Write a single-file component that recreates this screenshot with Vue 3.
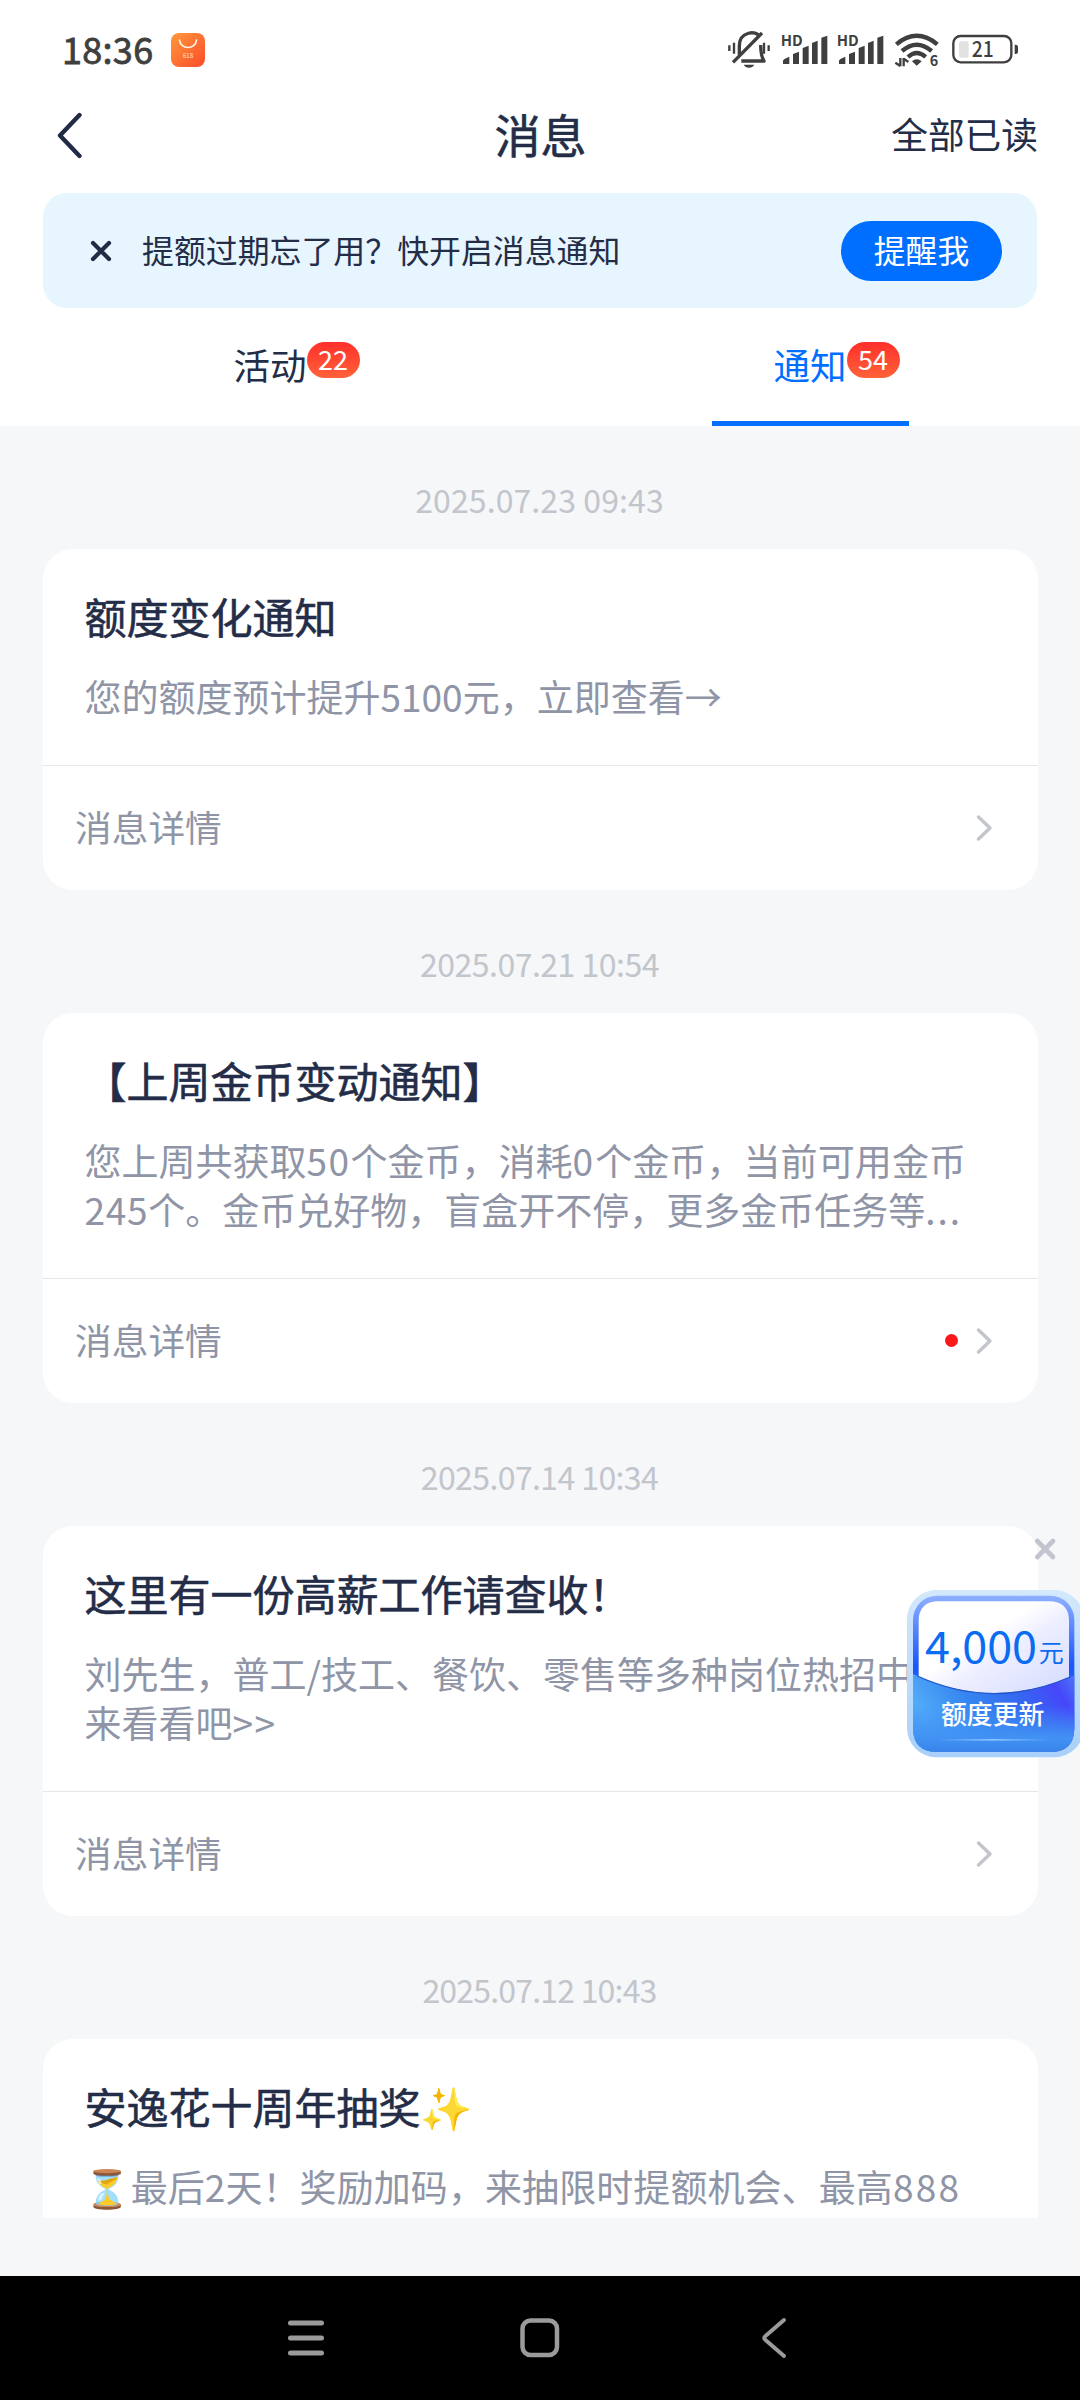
<script setup>
const tabs = [
  { label: '活动', count: 22, active: false },
  { label: '通知', count: 54, active: true },
]

// Each line is a list of [text, letter spacing in px] runs.
const messages = [
  {
    date: '2025.07.23 09:43',
    dateSpacing: 0.1,
    title: '额度变化通知',
    lines: [[['您的额度预计提升5100元，立即查看→', 0]]],
    unread: false,
  },
  {
    date: '2025.07.21 10:54',
    dateSpacing: -0.5,
    title: '【上周金币变动通知】',
    lines: [
      [['您上周共获取', 0], ['50', 1.5], ['个金币，消耗', 0], ['0', 2], ['个金币，当前可用金币', 0.1]],
      [['245', 0.7], ['个。金币兑好物，盲盒开不停，更多金币任务等', 0], ['...', 2]],
    ],
    unread: true,
  },
  {
    date: '2025.07.14 10:34',
    dateSpacing: -0.6,
    title: '这里有一份高薪工作请查收！',
    lines: [
      [['刘先生，普工/技工、餐饮、零售等多种岗位热招中', 0]],
      [['来看看吧', 0], ['>>', 1.5]],
    ],
    unread: false,
  },
  {
    date: '2025.07.12 10:43',
    dateSpacing: -0.8,
    title: '安逸花十周年抽奖✨',
    lines: [[['⏳最后2天！奖励加码，来抽限时提额机会、最高', 0.08], ['888', 2.3]]],
    unread: false,
  },
]
</script>

<template>
  <div class="phone">
    <div class="top">
      <div class="status">
        <div class="status-left">
          <span class="time">18:36</span>
          <svg class="app-icon" width="34" height="34" viewBox="0 0 34 34">
            <defs>
              <linearGradient id="bag" x1="0" y1="0" x2="1" y2="1">
                <stop offset="0" stop-color="#ff9a3c" />
                <stop offset="1" stop-color="#fb4a2a" />
              </linearGradient>
            </defs>
            <rect width="34" height="34" rx="8" fill="url(#bag)" />
            <path d="M8.500 7c1 10 16 10 17 0" fill="none" stroke="#fff3e6" stroke-width="1.700" stroke-linecap="round" />
            <text x="17" y="25" font-size="6" text-anchor="middle" fill="#ffe3d0">618</text>
          </svg>
        </div>
        <svg class="status-icons" width="300" height="40" viewBox="72 90 900 120">
          <g fill="none" stroke="#3f3f3f" stroke-width="10">
            <path d="M118 165V138C118 92 172 92 176 108M182 135C182 160 184 170 192 183H124" stroke-linejoin="round" />
            <path d="M186 99L99 187" />
            <path d="M88 136V153M102 128V161M192 128V161M206 136V153" stroke-width="7" />
          </g>
          <path d="M131 194H163Q158 203 147 203T131 194Z" fill="#3f3f3f" />
          <g v-for="x in [0, 168]" :key="x" :transform="`translate(${x} 0)`" fill="#3f3f3f">
            <text x="242" y="137" class="hd" font-size="45" textLength="66" lengthAdjust="spacingAndGlyphs">HD</text>
            <path d="M249 192V182Q249 177 268 170V192ZM279 192V162L297 155V192ZM308 192V144L326 137V192ZM336 192V129L353 122V192ZM364 192V113L382 107V192Z" />
          </g>
          <g fill="none" stroke="#3f3f3f" stroke-width="13">
            <path d="M589 133Q650 82 712 133" />
            <path d="M606 153Q650 115 695 153" />
            <path d="M624 171Q650 147 677 171" />
          </g>
          <path d="M636 184Q650 171 665 184L650 197Z" fill="#3f3f3f" />
          <path d="M601 174V199M611 199V174M586 188L601 198M611 176L625 186" stroke="#3f3f3f" stroke-width="7" fill="none" />
          <text x="689" y="199" class="hd" font-size="43" fill="#3f3f3f">6</text>
          <rect x="760" y="108" width="174" height="79" rx="22" fill="none" stroke="#3f3f3f" stroke-width="7" />
          <rect x="777" y="124" width="29" height="49" rx="6" fill="#e2e2e2" />
          <path d="M944 134h3q7 0 7 7v14q0 7-7 7h-3z" fill="#3f3f3f" />
          <text x="848" y="171" class="battery" font-size="66" text-anchor="middle" textLength="66" lengthAdjust="spacingAndGlyphs" fill="#3f3f3f">21</text>
        </svg>
      </div>

      <div class="nav">
        <svg class="back" width="28" height="48" viewBox="0 0 28 48">
          <path d="M25.500 3L6 23.500L25.500 44" fill="none" stroke="#222b45" stroke-width="4.400" stroke-linecap="round" stroke-linejoin="round" />
        </svg>
        <h1>消息</h1>
        <span class="read-all">全部已读</span>
      </div>

      <div class="banner">
        <svg width="22" height="22" viewBox="0 0 22 22">
          <path d="M3 3L19 19M19 3L3 19" stroke="#222b45" stroke-width="4.200" stroke-linecap="round" />
        </svg>
        <span class="banner-text">提额过期忘了用？快开启消息通知</span>
        <button class="remind">提醒我</button>
      </div>

      <div class="tabs">
        <div v-for="tab in tabs" :key="tab.label" class="tab" :class="{ active: tab.active }">
          <span class="tab-label">{{ tab.label }}<span class="badge">{{ tab.count }}</span></span>
        </div>
      </div>
    </div>

    <div class="list">
      <div v-for="msg in messages" :key="msg.date" class="entry">
        <div class="date"><span :style="{ letterSpacing: msg.dateSpacing + 'px' }">{{ msg.date }}</span></div>
        <div class="card">
          <div class="content">
            <h2>{{ msg.title }}</h2>
            <p v-for="(line, i) in msg.lines" :key="i"><span v-for="(run, j) in line" :key="j" :style="{ letterSpacing: run[1] + 'px' }">{{ run[0] }}</span></p>
          </div>
          <div class="more">
            <span class="more-label">消息详情</span>
            <i v-if="msg.unread" class="dot"></i>
            <svg width="18" height="28" viewBox="0 0 18 28">
              <path d="M3.500 3L15 14L3.500 25" fill="none" stroke="#c3c5cc" stroke-width="3.400" stroke-linecap="round" stroke-linejoin="round" />
            </svg>
          </div>
        </div>
      </div>
    </div>

    <div class="gutter"></div>

    <div class="system-nav">
      <svg width="40" height="44" viewBox="0 0 40 44">
        <path d="M4.500 7H35.500M4.500 22H35.500M4.500 37H35.500" stroke="#9b9b9b" stroke-width="5" stroke-linecap="round" />
      </svg>
      <svg width="40" height="44" viewBox="0 0 40 44">
        <rect x="2.500" y="4.500" width="34.500" height="34.500" rx="8" fill="none" stroke="#9b9b9b" stroke-width="4.500" />
      </svg>
      <svg width="40" height="44" viewBox="0 0 40 44">
        <path d="M30 4L11.500 20Q9 22 11.500 24L30 40" fill="none" stroke="#9b9b9b" stroke-width="4" stroke-linecap="round" />
      </svg>
    </div>

    <div class="float">
      <svg width="173" height="224" viewBox="81 108 519 672">
        <defs>
          <linearGradient id="ring" x1="0" y1="0" x2="0" y2="1">
            <stop offset="0" stop-color="#8fb0ff" />
            <stop offset=".45" stop-color="#1a56fa" />
            <stop offset="1" stop-color="#3a86ee" />
          </linearGradient>
          <linearGradient id="halo" x1="0" y1="0" x2="0" y2="1">
            <stop offset="0" stop-color="#d3e8fb" />
            <stop offset="1" stop-color="#a9d0fa" />
          </linearGradient>
          <linearGradient id="paper" x1="0" y1="0" x2="1" y2="1">
            <stop offset=".4" stop-color="#ffffff" />
            <stop offset=".55" stop-color="#eef0ff" />
            <stop offset="1" stop-color="#d3d9ff" />
          </linearGradient>
          <linearGradient id="pocket" x1="0" y1=".3" x2="1" y2="0">
            <stop offset="0" stop-color="#50aaf8" />
            <stop offset=".3" stop-color="#3686f0" />
            <stop offset=".6" stop-color="#3568f0" />
            <stop offset=".85" stop-color="#4646fa" />
            <stop offset="1" stop-color="#4b78f6" />
          </linearGradient>
          <linearGradient id="pocketFade" x1="0" y1="0" x2="0" y2="1">
            <stop offset=".4" stop-color="#3f8df5" stop-opacity="0" />
            <stop offset=".82" stop-color="#4192f3" />
            <stop offset="1" stop-color="#3a83ea" />
          </linearGradient>
          <linearGradient id="shine" x1="0" y1="0" x2="1" y2="0">
            <stop offset="0" stop-color="#8cc4ff" stop-opacity="0" />
            <stop offset=".5" stop-color="#8cc4ff" />
            <stop offset="1" stop-color="#8cc4ff" stop-opacity="0" />
          </linearGradient>
        </defs>
        <path d="M472 123L519 171M519 123L472 171" stroke="#c2c4cf" stroke-width="14" stroke-linecap="round" />
        <rect x="81" y="270" width="530" height="502" rx="88" fill="url(#halo)" />
        <rect x="99" y="287" width="484" height="469" rx="72" fill="url(#ring)" />
        <path d="M116 540V364Q116 304 176 304H507Q567 304 567 364V540Q340 640 116 540Z" fill="url(#paper)" />
        <path d="M99 522Q340 634 583 526V684Q583 756 511 756H171Q99 756 99 684Z" fill="url(#pocket)" />
        <path d="M99 522Q340 634 583 526V684Q583 756 511 756H171Q99 756 99 684Z" fill="url(#pocketFade)" />
        <path d="M112 528Q340 632 570 531" fill="none" stroke="#2456c8" stroke-width="4" />
        <rect x="170" y="717" width="340" height="5" fill="url(#shine)" />
        <text x="135" y="490" class="amount" font-size="130" textLength="336" lengthAdjust="spacingAndGlyphs">4,000</text>
        <text x="476" y="486" class="amount" font-size="75">元</text>
        <text x="338" y="672" class="float-label" font-size="77.500" text-anchor="middle">额度更新</text>
      </svg>
    </div>
  </div>
</template>

<style>
body {
  margin: 0;
}
</style>

<style scoped>
.phone {
  position: relative;
  width: 1080px;
  height: 2400px;
  overflow: hidden;
  display: flex;
  flex-direction: column;
  background: #f5f7f9;
  color: #242d47;
  font-family: "Noto Sans CJK SC", "Noto Color Emoji", sans-serif;
}

.top {
  height: 426px;
  background: #fff;
  display: flex;
  flex-direction: column;
}

.status {
  height: 100px;
  padding: 0 56px 0 62px;
  display: flex;
  justify-content: space-between;
  align-items: center;
  box-sizing: border-box;
}

.status-left {
  display: flex;
  align-items: center;
  gap: 17px;
}

.time {
  width: 92px;
  padding-bottom: 4px;
  font-size: 36px;
  font-weight: 400;
  letter-spacing: 0.3px;
  -webkit-text-stroke: 0.8px currentColor;
  line-height: 36px;
  color: #3f3f3f;
  white-space: nowrap;
}

.app-icon {
  margin-bottom: 1px;
}

.status-icons {
  display: block;
}

.hd {
  font-family: "Noto Sans CJK SC", sans-serif;
  font-weight: 700;
}

.battery {
  font-family: "Noto Sans CJK SC", sans-serif;
  font-weight: 500;
}

.nav {
  height: 72px;
  margin-bottom: 21px;
  padding: 0 42px 0 54px;
  display: flex;
  align-items: center;
  justify-content: space-between;
}

.back {
  flex: none;
}

.nav h1 {
  flex: 1;
  margin: 0 0 0 108px;
  padding-bottom: 5px;
  font-size: 46px;
  font-weight: 400;
  -webkit-text-stroke: 0.6px currentColor;
  line-height: 67px;
  text-align: center;
}

.read-all {
  padding-bottom: 5px;
  font-size: 36.7px;
  line-height: 67px;
}

.banner {
  height: 115px;
  margin: 0 43px;
  padding: 0 35px 0 47px;
  box-sizing: border-box;
  display: flex;
  align-items: center;
  background: #e7f5fe;
  border-radius: 24px;
}

.banner-text {
  flex: 1;
  margin-left: 30px;
  padding-bottom: 4px;
  font-size: 31.9px;
}

.remind {
  width: 161px;
  height: 60px;
  padding: 0 0 3px;
  border: 0;
  border-radius: 30px;
  background: #006fff;
  color: #fff;
  font: 400 31.8px/57px "Noto Sans CJK SC", sans-serif;
}

.tabs {
  flex: 1;
  display: flex;
}

.tab {
  flex: 1;
  display: flex;
  flex-direction: column;
  align-items: center;
  justify-content: space-between;
}

.tab-label {
  position: relative;
  margin-top: 30px;
  font-size: 36.5px;
  line-height: 54px;
}

.tab.active {
  color: #006fff;
}

.tab.active::after {
  content: "";
  width: 197px;
  height: 5px;
  background: #006fff;
}

.badge {
  position: absolute;
  left: 100%;
  top: 4px;
  width: 53px;
  height: 36px;
  border-radius: 18px;
  background: linear-gradient(#ff2f2b, #ff6239);
  color: #fff;
  font-size: 27px;
  line-height: 34px;
  text-align: center;
}

.list {
  height: 1792px;
  overflow: hidden;
}

.entry {
  display: flex;
  flex-direction: column;
}

.date {
  height: 123px;
  display: flex;
  justify-content: center;
  align-items: center;
  padding: 23px 1px 0 0;
  box-sizing: border-box;
  font-size: 32px;
  line-height: 48px;
  color: #c3c5cc;
}

.card {
  margin: 0 42.5px;
  border-radius: 30px;
  background: #fff;
}

.content {
  padding: 42px 43px 44px 42px;
  border-bottom: 1px solid #e6e7ea;
}

.content h2 {
  margin: 0 0 31px;
  font-size: 42px;
  font-weight: 400;
  -webkit-text-stroke: 0.6px currentColor;
  line-height: 50px;
  white-space: nowrap;
}

.content p {
  margin: 0;
  font-size: 37px;
  line-height: 49px;
  color: #8f95a6;
  white-space: nowrap;
}

.more {
  height: 124px;
  padding: 0 44.5px 0 32.5px;
  display: flex;
  align-items: center;
}

.more-label {
  flex: 1;
  padding-bottom: 4px;
  font-size: 36.7px;
  line-height: 50px;
  color: #8f95a6;
}

.dot {
  width: 13px;
  height: 13px;
  margin: 0 17px 1px 0;
  border-radius: 50%;
  background: #fa1919;
}

.gutter {
  height: 58px;
}

.system-nav {
  flex: 1;
  padding: 0 286px;
  display: flex;
  justify-content: space-between;
  align-items: center;
  background: #000;
}

.float {
  position: absolute;
  left: 907px;
  top: 1536px;
}

.float svg {
  display: block;
}

.amount {
  fill: #0a6cf0;
  font-family: "Noto Sans CJK SC", sans-serif;
}

.float-label {
  fill: #fff;
  font-family: "Noto Sans CJK SC", sans-serif;
  font-weight: 500;
}
</style>
